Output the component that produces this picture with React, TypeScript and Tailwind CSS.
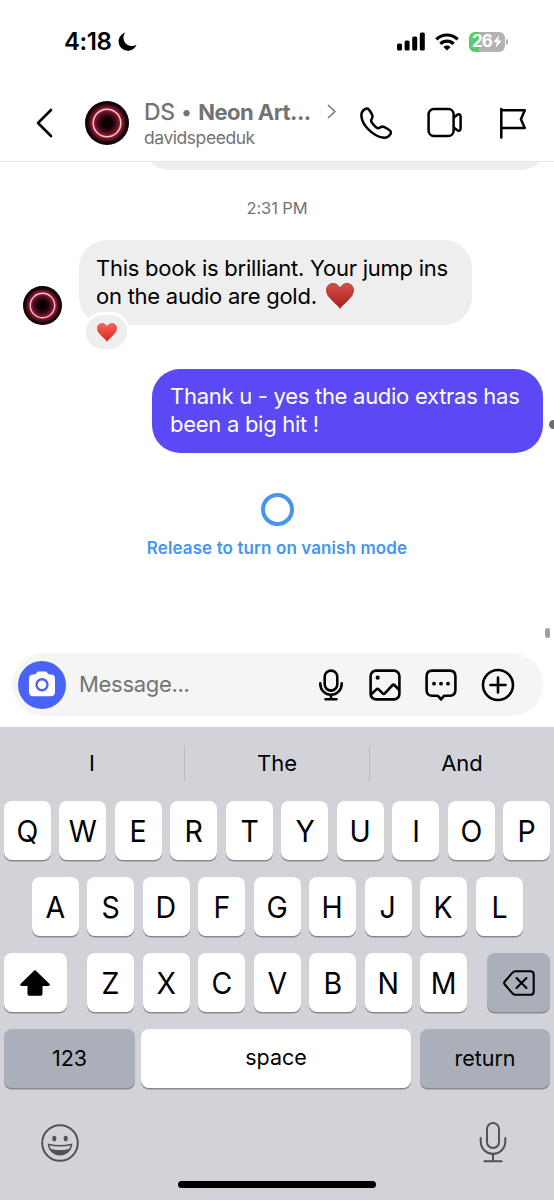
import React from 'react';

const topRow = ['Q', 'W', 'E', 'R', 'T', 'Y', 'U', 'I', 'O', 'P'];
const homeRow = ['A', 'S', 'D', 'F', 'G', 'H', 'J', 'K', 'L'];
const bottomRow = ['Z', 'X', 'C', 'V', 'B', 'N', 'M'];

const Avatar = ({ className }: { className: string }) => (
  <svg viewBox="0 0 44 44" className={className}>
    <defs>
      <radialGradient id="neon">
        <stop offset="0" stopColor="#050001" />
        <stop offset="0.24" stopColor="#120206" />
        <stop offset="0.44" stopColor="#4f0d1f" />
        <stop offset="0.62" stopColor="#a01f3c" />
        <stop offset="0.74" stopColor="#6e1529" />
        <stop offset="0.88" stopColor="#1c0409" />
        <stop offset="1" stopColor="#050002" />
      </radialGradient>
    </defs>
    <circle cx="22" cy="22" r="22" fill="url(#neon)" />
    <circle cx="22" cy="22" r="13.8" fill="none" stroke="#ffc9c8" strokeWidth="1.5" />
  </svg>
);

const Heart = ({ className, id, from, to }: { className: string; id: string; from: string; to: string }) => (
  <svg viewBox="0 0 28 26" className={className}>
    <defs>
      <linearGradient id={id} x1="0" y1="0" x2="0" y2="1">
        <stop offset="0" stopColor={from} />
        <stop offset="1" stopColor={to} />
      </linearGradient>
    </defs>
    <path
      d="M14 25.5C12.5 22.8 9.5 20.8 6 17.2 2.4 13.5.5 10.7.5 7.2.5 3.2 3.3.5 7 .5c3.3 0 5.8 2 7 5 1.2-3 3.7-5 7-5 3.7 0 6.5 2.7 6.5 6.7 0 3.5-1.9 6.3-5.5 10-3.5 3.6-6.5 5.6-8 8.3Z"
      fill={`url(#${id})`}
      stroke={to}
      strokeWidth="0.7"
    />
  </svg>
);

const Key = ({ label }: { label: string }) => (
  <div className="flex h-[59px] w-[47px] items-center justify-center rounded-[8px] bg-white text-[30px] font-[370] shadow-[0_1.5px_0_#898a8d]">
    <span className="relative top-[1px] scale-x-[0.95]">{label}</span>
  </div>
);

const StatusBar = () => (
  <div className="flex h-[83px] items-center pl-[64px] pr-[46px]">
    <span className="text-[24px] font-semibold leading-none tracking-[-0.4px]">4:18</span>
    <svg viewBox="0 0 19 19" className="ml-[6px] h-[19px] w-[19px]">
      <path d="M7.2.5A9.3 9.3 0 1 0 18.6 12.600 8.400 8.400 0 0 1 7.2.5Z" />
    </svg>
    <svg viewBox="0 0 28 19" className="ml-auto h-[19px] w-[28px]">
      <rect x="0" y="11.5" width="5" height="7" rx="1.5" />
      <rect x="7.6" y="8.5" width="5" height="10" rx="1.5" />
      <rect x="15.2" y="4.5" width="5" height="14" rx="1.5" />
      <rect x="22.8" y="0.5" width="5" height="18" rx="1.5" />
    </svg>
    <svg viewBox="0 0 24 18" className="ml-[10px] h-[18px] w-[24px]" fill="none" stroke="#000" strokeWidth="3.2">
      <path d="M1.3 6.4a15.2 15.2 0 0 1 21.4 0" />
      <path d="M5.4 10.8a9.4 9.4 0 0 1 13.2 0" />
      <path d="M12 17.5 8.4 14a5.1 5.1 0 0 1 7.2 0Z" fill="#000" stroke="none" />
    </svg>
    <div className="ml-[10px] flex h-[20px] w-[36px] items-center justify-center rounded-[6px] bg-[linear-gradient(90deg,#5bcb67_0_10px,#b2b2b3_10px)] text-white">
      <span className="text-[17px] font-bold leading-none tracking-[-0.8px]">26</span>
      <svg viewBox="0 0 8 12" className="ml-[1px] h-[13px] w-[9px]" fill="#fff">
        <path d="M5.6 0 .2 6.8h3.2L2.2 12 7.8 5H4.6Z" />
      </svg>
    </div>
    <div className="ml-[1px] h-[6px] w-[2px] rounded-r-full bg-[#b2b2b3]" />
  </div>
);

const ChatHeader = () => (
  <div className="flex h-[79px] items-center border-b border-[#e4e4e5] pl-[36px] pt-px">
    <svg viewBox="0 0 17 30" className="h-[30px] w-[17px]" fill="none" stroke="#000" strokeWidth="2.6" strokeLinecap="round" strokeLinejoin="round">
      <path d="M15 2 2 15 15 28" />
    </svg>
    <Avatar className="ml-[32px] h-[44px] w-[44px]" />
    <div className="ml-[15px] w-[168px] whitespace-nowrap pt-[3px] text-[#737373]">
      <div className="flex h-[28px] items-center text-[22px]">
        <span className="text-[23px] font-medium tracking-[-0.3px]">DS</span>
        <span className="ml-[7px] text-[20px] font-bold">•</span>
        <span className="ml-[7px] font-[650] tracking-[-0.55px]">Neon Art...</span>
      </div>
      <div className="h-[24px] text-[17.5px] leading-[24px] tracking-[-0.45px]">davidspeeduk</div>
    </div>
    <svg viewBox="0 0 9 15" className="ml-[15px] mt-[-23px] h-[15px] w-[9px]" fill="none" stroke="#737373" strokeWidth="1.5">
      <path d="M1 1l7 6.5L1 14" />
    </svg>
    <svg viewBox="0 0 32 32" className="ml-[24px] h-[32px] w-[32px]" fill="none" stroke="#000" strokeWidth="2.5" strokeLinejoin="round">
      <path d="M5 2.1C2.2 3.7 1.2 5.7 1.4 8.9c.3 4.6 2.5 8.7 6.1 12.6 4.3 4.6 10.2 8.6 16.4 9.2 3.5.2 5.2-1.2 6.5-3.5.8-1.5.6-2.7-.7-3.8-1.7-1.4-3.7-2.6-5.8-3.5-1.5-.6-2.7-.2-3.9.6-1.3.9-2.4.9-3.7-.1-1.8-1.4-3.4-3.1-4.600-5-.8-1.3-.8-2.3 0-3.5.8-1.3 1.1-2.4.5-3.9-.8-2-1.9-3.7-3.3-5.4-1.1-1.2-2.5-1.3-3.9-.5Z" />
    </svg>
    <svg viewBox="0 0 36 31" className="ml-[35px] h-[31px] w-[36px]" fill="none" stroke="#000" strokeWidth="2.5" strokeLinejoin="round">
      <rect x="1.6" y="2" width="25" height="27" rx="5.2" />
      <path d="m26.6 10.7 3.7-3c1.5-1.1 3.3-.2 3.3 1.7v12.2c0 1.9-1.8 2.8-3.3 1.7l-3.7-3" />
    </svg>
    <svg viewBox="0 0 28 32" className="ml-[36px] h-[32px] w-[28px]" fill="none" stroke="#000" strokeWidth="2.5" strokeLinecap="round" strokeLinejoin="round">
      <path d="M2.3 2v28.6M2.3 3.3h23.5l-3.9 9 3.9 8.6H2.3" />
    </svg>
  </div>
);

const Messages = () => (
  <div className="relative h-[491px] overflow-hidden text-[22px] leading-[28px]">
    <div className="ml-[152px] mr-[16px] h-[8px] rounded-b-[28px] bg-[#eee] [border-bottom-left-radius:22px_8px] [border-bottom-right-radius:22px_8px]" />
    <div className="mt-[28px] text-center text-[16.5px] leading-[20px] tracking-[-0.1px] text-[#737373]">2:31 PM</div>
    <div className="mt-[22px] flex items-end pl-[23px]">
      <Avatar className="h-[39px] w-[39px]" />
      <div className="relative ml-[17px] h-[85px] w-[393px] whitespace-nowrap rounded-[28px] bg-[#eee] pl-[17px] pt-[14px] tracking-[-0.25px]">
        <div>This book is brilliant. Your jump ins</div>
        <div className="flex items-center">
          on the audio are gold.
          <Heart className="ml-[9px] h-[26px] w-[28px]" id="darkHeart" from="#d9504a" to="#a31f1b" />
        </div>
        <div className="absolute left-[4px] top-[72px] flex h-[40px] w-[47px] items-center justify-center rounded-full border-[3px] border-white bg-[#eee]">
          <Heart className="h-[19px] w-[20px]" id="redHeart" from="#f8635a" to="#d8271d" />
        </div>
      </div>
    </div>
    <div className="ml-[152px] mt-[44px] h-[84px] w-[391px] whitespace-nowrap rounded-[28px] bg-[#5b49f5] pl-[18px] pt-[13px] tracking-[-0.28px] text-white">
      <div>Thank u - yes the audio extras has</div>
      <div>been a big hit !</div>
    </div>
    <div className="mx-auto mt-[40px] h-[33px] w-[33px] rounded-full border-[4px] border-[#4696ee]" />
    <div className="mt-[8px] text-center text-[17px] font-semibold leading-[28px] tracking-[0.1px] text-[#4696ee]">Release to turn on vanish mode</div>
    <div className="absolute -right-[4px] top-[258px] h-[9px] w-[9px] rounded-full bg-[#6b6b6b]" />
    <div className="absolute right-[4px] top-[466px] h-[10px] w-[5px] rounded-full bg-[#a0a0a0]" />
  </div>
);

const Composer = () => (
  <div className="ml-[12px] flex h-[63px] w-[531px] items-center rounded-full bg-[#f5f5f5] pl-[6px]">
    <div className="flex h-[48px] w-[48px] items-center justify-center rounded-full bg-[#4963f6]">
      <svg viewBox="0 0 28 26" className="relative -top-[1px] h-[26px] w-[28px]">
        <path d="M9 1.6C9.5.7 10 .5 11 .5h6c1 0 1.5.2 2 1.1.8 1.3 1.5 1.8 3 1.8h1c2.5 0 4 1.5 4 4v13.3c0 3-1.5 4.5-4.5 4.5h-17C2.5 25.2 1 23.7 1 20.7V7.4c0-2.5 1.5-4 4-4h1c1.5 0 2.2-.5 3-1.8Z" fill="#fff" />
        <circle cx="14" cy="13.7" r="5.5" fill="none" stroke="#4963f6" strokeWidth="2.4" />
      </svg>
    </div>
    <span className="ml-[13px] w-[240px] text-[22px] tracking-[-0.3px] text-[#737373]">Message...</span>
    <svg viewBox="0 0 24 32" className="h-[32px] w-[24px]" fill="none" stroke="#000" strokeWidth="2.6" strokeLinecap="round" strokeLinejoin="round">
      <rect x="5.7" y="1.6" width="12.6" height="20" rx="6.3" />
      <path d="M1.3 14.2v.8a10.7 10.7 0 0 0 21.4 0v-.8M12 25.7v4M6.5 30.3h11" />
    </svg>
    <svg viewBox="0 0 32 32" className="ml-[26px] h-[32px] w-[32px]" fill="none" stroke="#000" strokeWidth="2.6" strokeLinejoin="round">
      <rect x="1.6" y="1.6" width="28.8" height="28.8" rx="5.5" />
      <path d="M2 25.5l5.7-5.4a1.2 1.2 0 0 1 1.7.1l4.5 4.5a1.2 1.2 0 0 0 1.7 0l8-8.7a1.2 1.2 0 0 1 1.7 0l5 5" />
      <circle cx="8.7" cy="8.7" r="2.1" fill="#000" stroke="none" />
    </svg>
    <svg viewBox="0 0 32 32" className="ml-[24px] h-[32px] w-[32px]" fill="none" stroke="#000" strokeWidth="2.6" strokeLinejoin="round">
      <path d="M7.3 1.6h17.4c3.7 0 5.7 2 5.7 5.7v13.8c0 3.7-2 5.7-5.7 5.7h-4.6c-.8 0-1.3.3-1.8.9L16 30.4l-2.3-2.7c-.5-.6-1-.9-1.8-.9H7.300c-3.7 0-5.7-2-5.7-5.7V7.300c0-3.7 2-5.7 5.7-5.7Z" />
      <g fill="#000" stroke="none">
        <circle cx="9" cy="14.7" r="1.9" />
        <circle cx="16" cy="14.7" r="1.9" />
        <circle cx="23" cy="14.7" r="1.9" />
      </g>
    </svg>
    <svg viewBox="0 0 34 34" className="ml-[24px] h-[34px] w-[34px]" fill="none" stroke="#000" strokeWidth="2.6" strokeLinecap="round">
      <circle cx="17" cy="17" r="15" />
      <path d="M17 9.5v15M9.5 17h15" />
    </svg>
  </div>
);

const Keyboard = () => (
  <div className="mt-[11px] h-[473px] bg-[#d1d3d9]">
    <div className="flex h-[74px] items-center pb-[2px] text-[22px]">
      <div className="flex-1 text-center">I</div>
      <div className="h-[35px] w-px bg-[#b9bbc1]" />
      <div className="flex-1 text-center">The</div>
      <div className="h-[35px] w-px bg-[#b9bbc1]" />
      <div className="flex-1 text-center">And</div>
    </div>
    <div className="flex flex-col gap-[17px] px-[4px]">
      <div className="flex justify-between">
        {topRow.map((letter) => (
          <Key key={letter} label={letter} />
        ))}
      </div>
      <div className="flex justify-between px-[27.5px]">
        {homeRow.map((letter) => (
          <Key key={letter} label={letter} />
        ))}
      </div>
      <div className="flex justify-between">
        <div className="flex h-[59px] w-[63px] items-center justify-center rounded-[8px] bg-white shadow-[0_1.5px_0_#898a8d]">
          <svg viewBox="0 0 30 26" className="mr-[1px] h-[26px] w-[30px]">
            <path d="M13.8.9c.8-.8 1.6-.8 2.4 0l12.900 12.500c1.300 1.300.8 2.600-.9 2.600H22.5v7.5c0 1.5-.8 2.300-2.300 2.300H9.800c-1.500 0-2.300-.8-2.300-2.300V16H1.800C.1 16-.4 14.700.9 13.400Z" />
          </svg>
        </div>
        <div className="flex w-[380px] justify-between">
          {bottomRow.map((letter) => (
            <Key key={letter} label={letter} />
          ))}
        </div>
        <div className="flex h-[59px] w-[63px] items-center justify-center rounded-[8px] bg-[#abafb9] shadow-[0_1.5px_0_#898a8d]">
          <svg viewBox="0 0 32 26" className="h-[26px] w-[32px]" fill="none" stroke="#000" strokeWidth="2.1" strokeLinecap="round" strokeLinejoin="round">
            <path d="M12.5 1.2h14.800c2.200 0 3.400 1.200 3.400 3.400v16.800c0 2.200-1.200 3.400-3.400 3.400H12.500c-1.200 0-2-.4-2.800-1.200L2 14.800c-1.200-1.200-1.200-2.400 0-3.600l7.700-8.800c.8-.8 1.600-1.200 2.800-1.200Z" />
            <path d="m13.500 8 10 10M23.500 8l-10 10" />
          </svg>
        </div>
      </div>
      <div className="flex text-[21.5px]">
        <div className="flex h-[59px] w-[131px] items-center justify-center rounded-[8px] bg-[#abafb9] shadow-[0_1.5px_0_#898a8d]">123</div>
        <div className="ml-[6px] flex h-[59px] w-[270px] items-center justify-center rounded-[8px] bg-white pb-[3px] shadow-[0_1.5px_0_#898a8d]">space</div>
        <div className="ml-[9px] flex h-[59px] w-[130px] items-center justify-center rounded-[8px] bg-[#abafb9] shadow-[0_1.5px_0_#898a8d]">return</div>
      </div>
    </div>
    <div className="mt-[33px] flex items-center justify-between pl-[41px] pr-[47px]">
      <svg viewBox="0 0 38 38" className="relative top-[1px] h-[38px] w-[38px]" fill="none" stroke="#505257" strokeWidth="2">
        <circle cx="19" cy="19" r="17.8" />
        <ellipse cx="13.3" cy="14.5" rx="2.1" ry="2.7" fill="#505257" stroke="none" />
        <ellipse cx="24.7" cy="14.5" rx="2.1" ry="2.7" fill="#505257" stroke="none" />
        <path d="M7.5 20.5c7.3 1.7 15.7 1.7 23 0-.8 6.3-5.5 10.3-11.5 10.3S8.3 26.8 7.5 20.5Z" strokeWidth="1.5" />
        <path d="M8.8 24.5c6.5 2 13.9 2 20.4 0-1.7 4-5.4 6.3-10.2 6.3s-8.5-2.3-10.2-6.3Z" fill="#505257" stroke="none" />
      </svg>
      <svg viewBox="0 0 28 42" className="h-[42px] w-[28px]" fill="none" stroke="#505257" strokeWidth="2" strokeLinecap="round">
        <rect x="8" y="2" width="12" height="25" rx="6" />
        <path d="M1.7 17v3.5a12.3 12.3 0 0 0 24.6 0V17M14 33v7M5.3 40.2h17.4" />
      </svg>
    </div>
    <div className="mx-auto mt-[18px] h-[7px] w-[198px] rounded-full bg-black" />
  </div>
);

const App = () => {
  return (
    <div className="h-[1200px] w-[554px] overflow-hidden bg-white font-['Inter','Liberation_Sans',sans-serif] text-black">
      <StatusBar />
      <ChatHeader />
      <Messages />
      <Composer />
      <Keyboard />
    </div>
  );
};

export default App;
